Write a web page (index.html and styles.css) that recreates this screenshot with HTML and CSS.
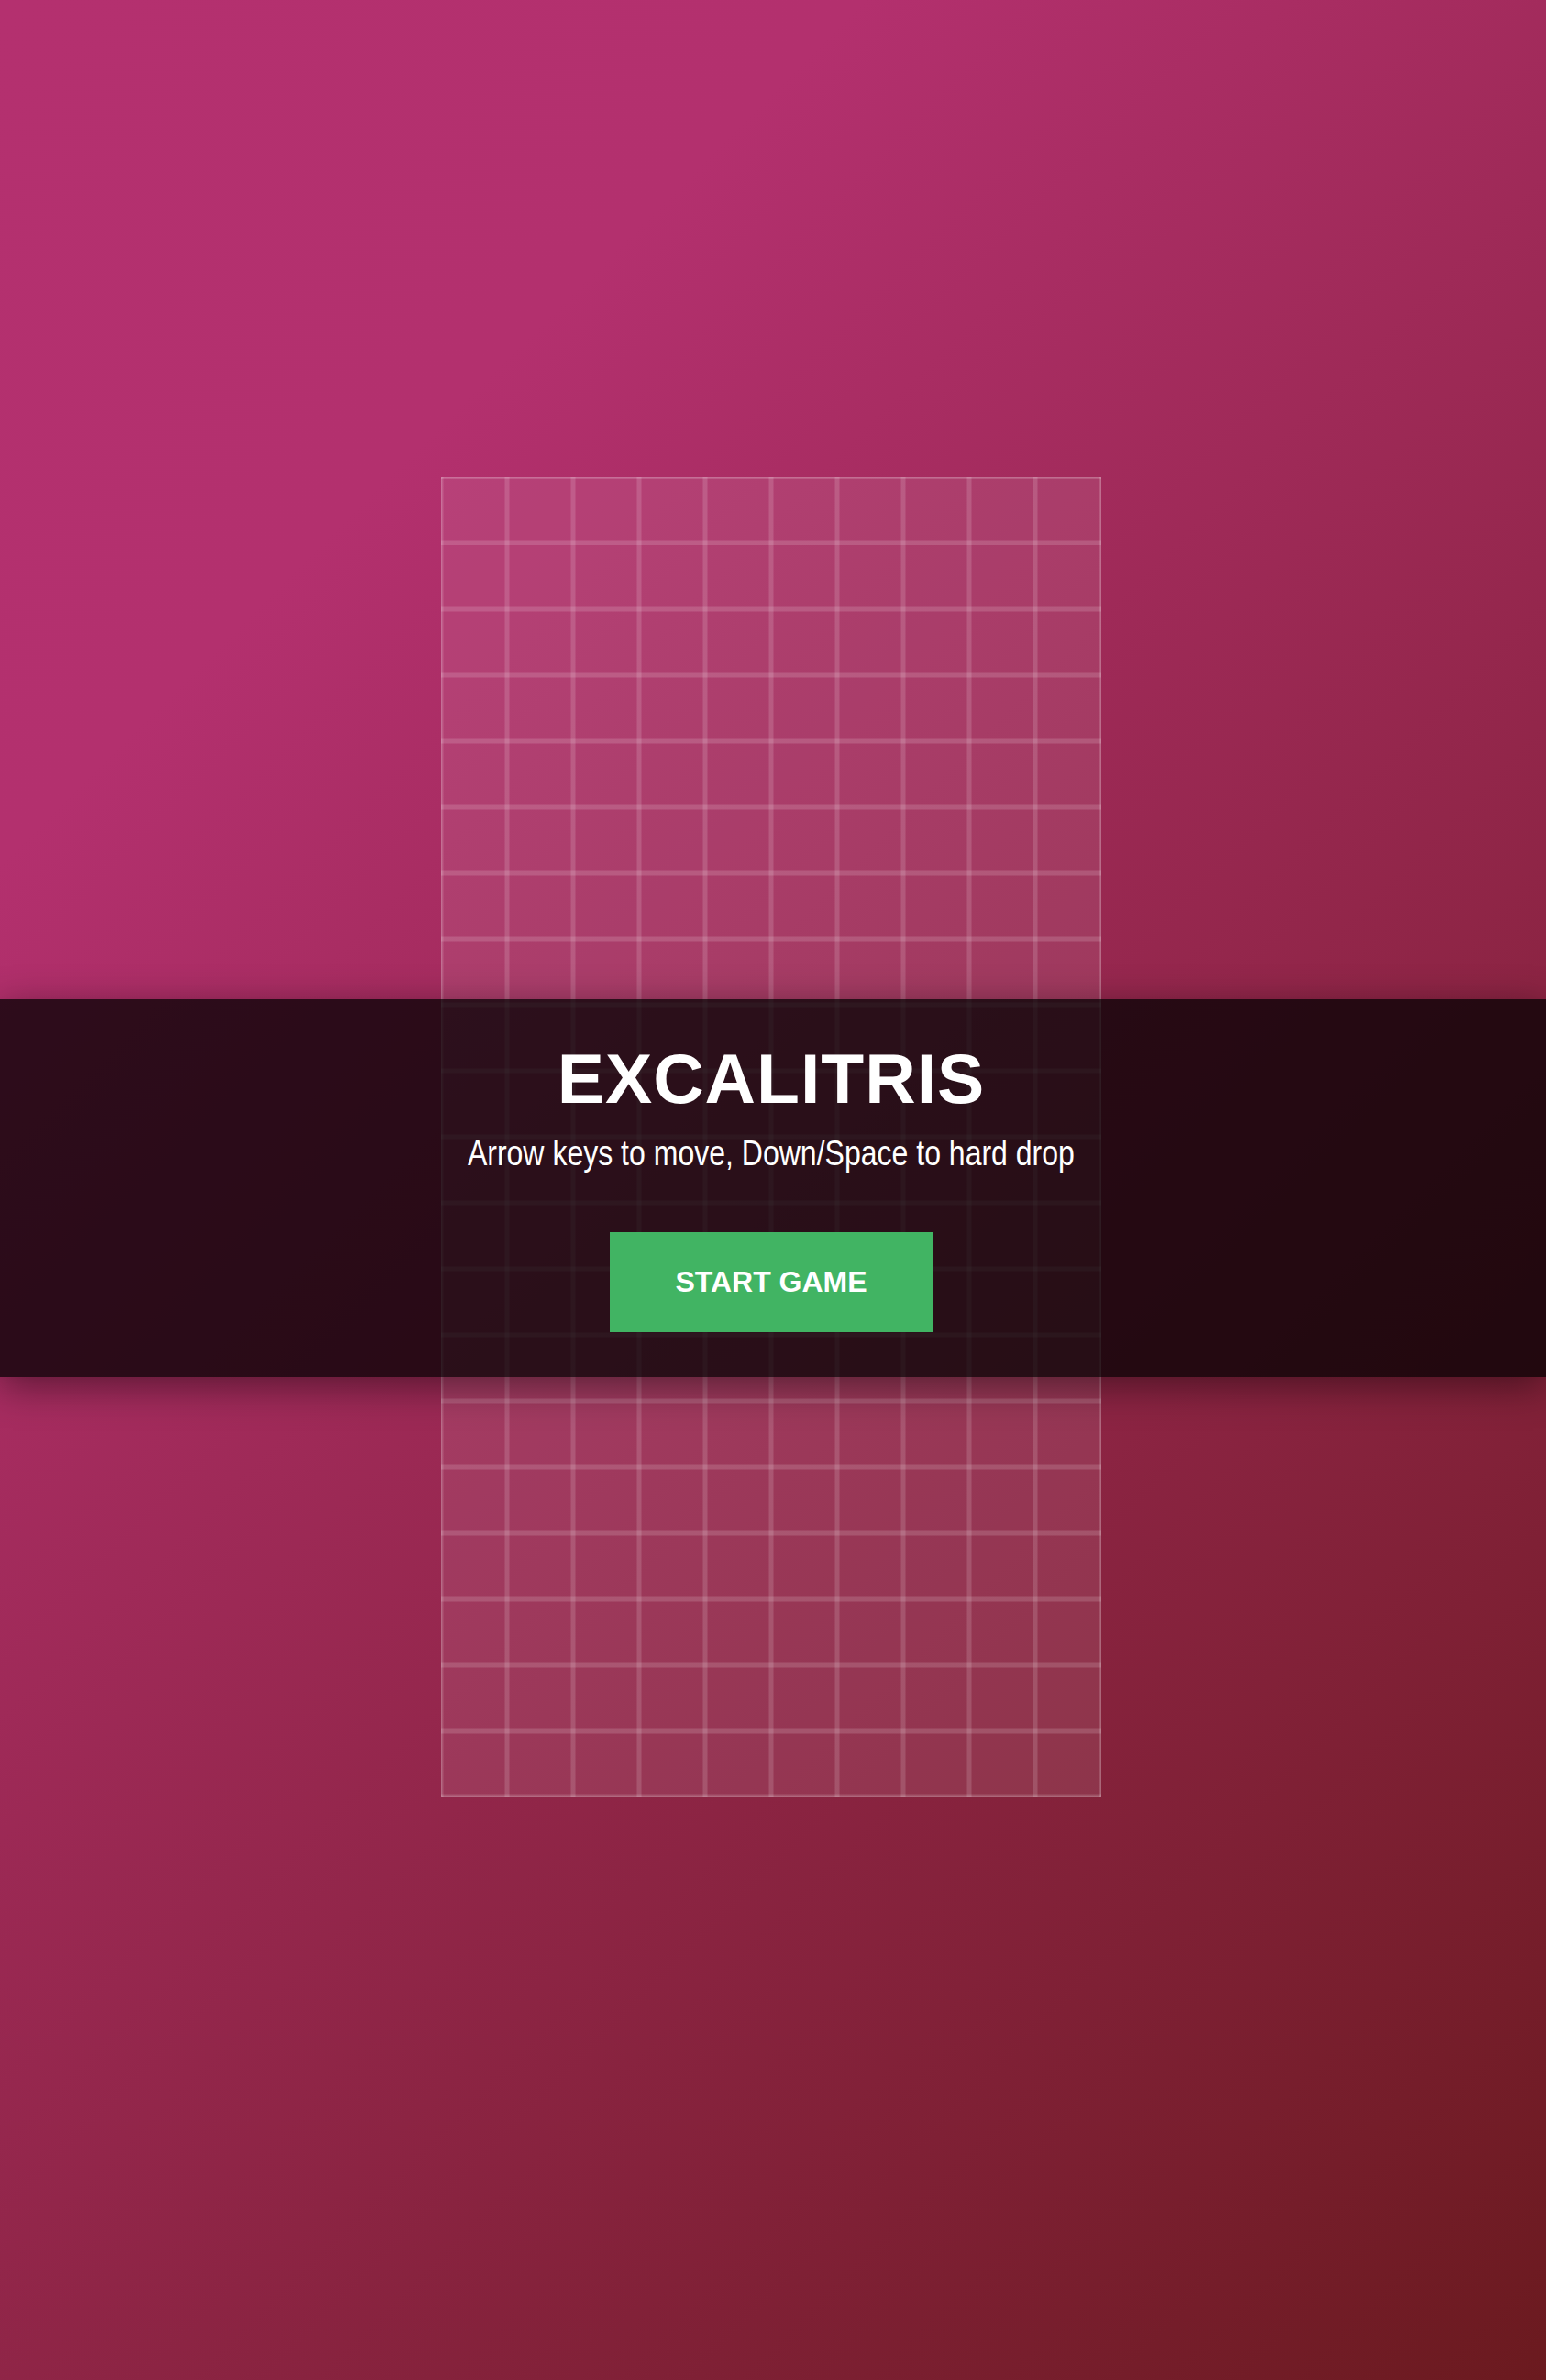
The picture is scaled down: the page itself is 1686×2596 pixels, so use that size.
FILE: index.html
```html
<!DOCTYPE html>
<html lang="en">
<head>
<meta charset="utf-8">
<title>Excalitris</title>
<link rel="stylesheet" href="styles.css">
</head>
<body>
<main class="stage">
  <div class="board" aria-hidden="true"></div>
  <section class="overlay">
    <h1 class="title">EXCALITRIS</h1>
    <p class="hint">Arrow keys to move, Down/Space to hard drop</p>
    <button class="start" type="button">START GAME</button>
  </section>
</main>
</body>
</html>
```
FILE: styles.css
```css
html, body {
  margin: 0;
  padding: 0;
}

body {
  min-height: 2596px;
  background: linear-gradient(135deg, #b4306f 0%, #b3306e 22%, #6b1a1f 100%);
  font-family: "Liberation Sans", Arial, Helvetica, sans-serif;
  color: #fff;
  overflow: hidden;
}

.stage {
  position: relative;
  height: 2596px;
  box-sizing: border-box;
  padding: 520px 4px 0 0;
  display: flex;
  justify-content: center;
  align-items: flex-start;
}

.board {
  width: 720px;
  height: 1440px;
  background-color: rgba(255, 255, 255, 0.085);
  background-image:
    linear-gradient(to right,
      rgba(255, 255, 255, 0.15) 0, rgba(255, 255, 255, 0.15) 1.5px,
      rgba(255, 255, 255, 0) 3.5px, rgba(255, 255, 255, 0) 68.5px,
      rgba(255, 255, 255, 0.15) 70.5px, rgba(255, 255, 255, 0.15) 72px),
    linear-gradient(to bottom,
      rgba(255, 255, 255, 0.15) 0, rgba(255, 255, 255, 0.15) 1.5px,
      rgba(255, 255, 255, 0) 3.5px, rgba(255, 255, 255, 0) 68.5px,
      rgba(255, 255, 255, 0.15) 70.5px, rgba(255, 255, 255, 0.15) 72px);
  background-size: 72px 72px;
  box-shadow: inset 0 0 0 1px rgba(255, 255, 255, 0.12);
}

.overlay {
  position: absolute;
  left: 0;
  right: 0;
  top: 1090px;
  height: 412px;
  box-sizing: border-box;
  padding: 48px 4px 0 0;
  background: rgba(0, 0, 0, 0.74);
  box-shadow: 0 10px 40px rgba(0, 0, 0, 0.45);
  display: flex;
  flex-direction: column;
  align-items: center;
}

.title {
  margin: 0;
  font-size: 76.8px;
  line-height: 1;
  font-weight: 700;
  letter-spacing: 1px;
}

.hint {
  margin: 24px 0 0;
  font-size: 38.4px;
  line-height: 1;
  font-weight: 400;
  white-space: nowrap;
  transform: scaleX(0.834);
}

.start {
  margin-top: 67px;
  padding: 38px 71px;
  border: 0;
  border-radius: 0;
  background: #41b463;
  color: #fff;
  font-family: inherit;
  font-size: 32px;
  line-height: 33px;
  font-weight: 700;
  cursor: pointer;
}
```
